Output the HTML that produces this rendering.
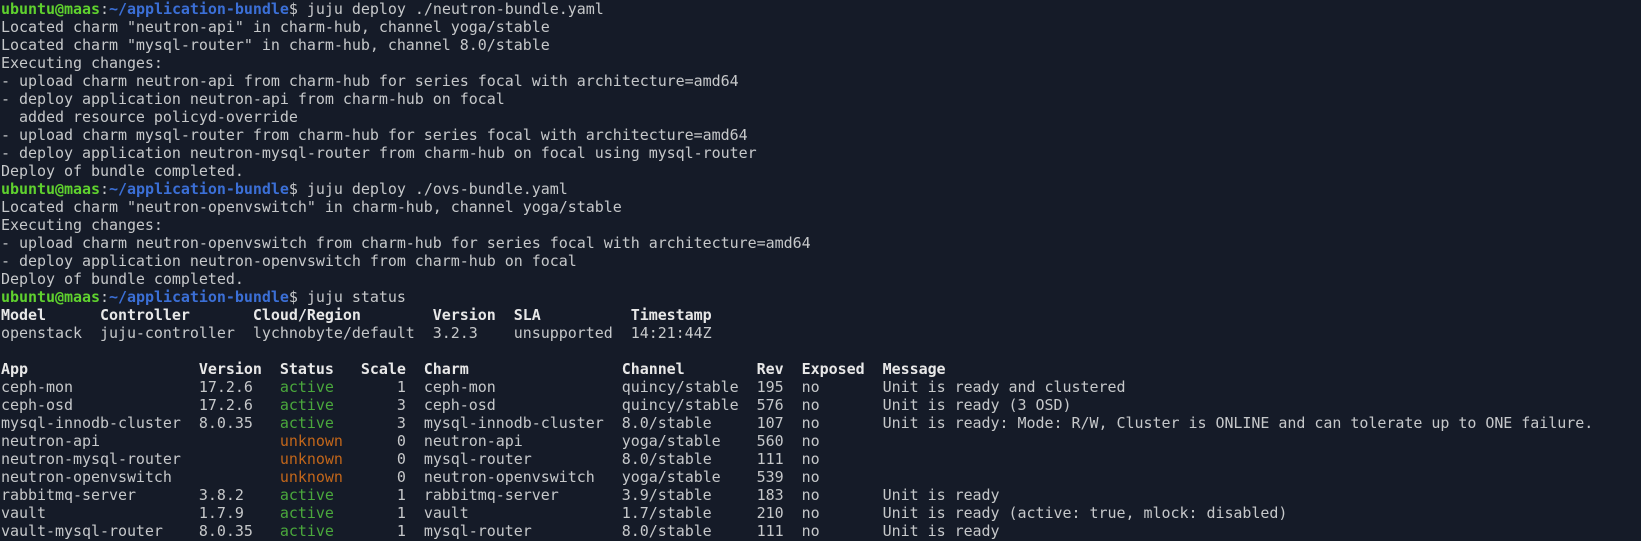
<!DOCTYPE html>
<html><head><meta charset="utf-8"><style>
html,body{margin:0;padding:0;background:#151b28;width:1641px;height:541px;overflow:hidden}
pre{margin:0;padding:0 0 0 1px;font-family:"DejaVu Sans Mono","Liberation Mono",monospace;font-size:15px;letter-spacing:-0.035px;line-height:18px;color:#c6c8ca;white-space:pre}
.g{color:#5fd12e;font-weight:bold}.b{color:#3b6fd6;font-weight:bold}
.a{color:#4aa83c}.u{color:#c2661a}.h{font-weight:bold;color:#e8e8e8}
</style></head><body><pre><span class="g">ubuntu@maas</span>:<span class="b">~/application-bundle</span>$ juju deploy ./neutron-bundle.yaml
Located charm "neutron-api" in charm-hub, channel yoga/stable
Located charm "mysql-router" in charm-hub, channel 8.0/stable
Executing changes:
- upload charm neutron-api from charm-hub for series focal with architecture=amd64
- deploy application neutron-api from charm-hub on focal
  added resource policyd-override
- upload charm mysql-router from charm-hub for series focal with architecture=amd64
- deploy application neutron-mysql-router from charm-hub on focal using mysql-router
Deploy of bundle completed.
<span class="g">ubuntu@maas</span>:<span class="b">~/application-bundle</span>$ juju deploy ./ovs-bundle.yaml
Located charm "neutron-openvswitch" in charm-hub, channel yoga/stable
Executing changes:
- upload charm neutron-openvswitch from charm-hub for series focal with architecture=amd64
- deploy application neutron-openvswitch from charm-hub on focal
Deploy of bundle completed.
<span class="g">ubuntu@maas</span>:<span class="b">~/application-bundle</span>$ juju status
<span class="h">Model      Controller       Cloud/Region        Version  SLA          Timestamp</span>
openstack  juju-controller  lychnobyte/default  3.2.3    unsupported  14:21:44Z

<span class="h">App                   Version  Status   Scale  Charm                 Channel        Rev  Exposed  Message</span>
ceph-mon              17.2.6   <span class="a">active</span>       1  ceph-mon              quincy/stable  195  no       Unit is ready and clustered
ceph-osd              17.2.6   <span class="a">active</span>       3  ceph-osd              quincy/stable  576  no       Unit is ready (3 OSD)
mysql-innodb-cluster  8.0.35   <span class="a">active</span>       3  mysql-innodb-cluster  8.0/stable     107  no       Unit is ready: Mode: R/W, Cluster is ONLINE and can tolerate up to ONE failure.
neutron-api                    <span class="u">unknown</span>      0  neutron-api           yoga/stable    560  no
neutron-mysql-router           <span class="u">unknown</span>      0  mysql-router          8.0/stable     111  no
neutron-openvswitch            <span class="u">unknown</span>      0  neutron-openvswitch   yoga/stable    539  no
rabbitmq-server       3.8.2    <span class="a">active</span>       1  rabbitmq-server       3.9/stable     183  no       Unit is ready
vault                 1.7.9    <span class="a">active</span>       1  vault                 1.7/stable     210  no       Unit is ready (active: true, mlock: disabled)
vault-mysql-router    8.0.35   <span class="a">active</span>       1  mysql-router          8.0/stable     111  no       Unit is ready</pre></body></html>
